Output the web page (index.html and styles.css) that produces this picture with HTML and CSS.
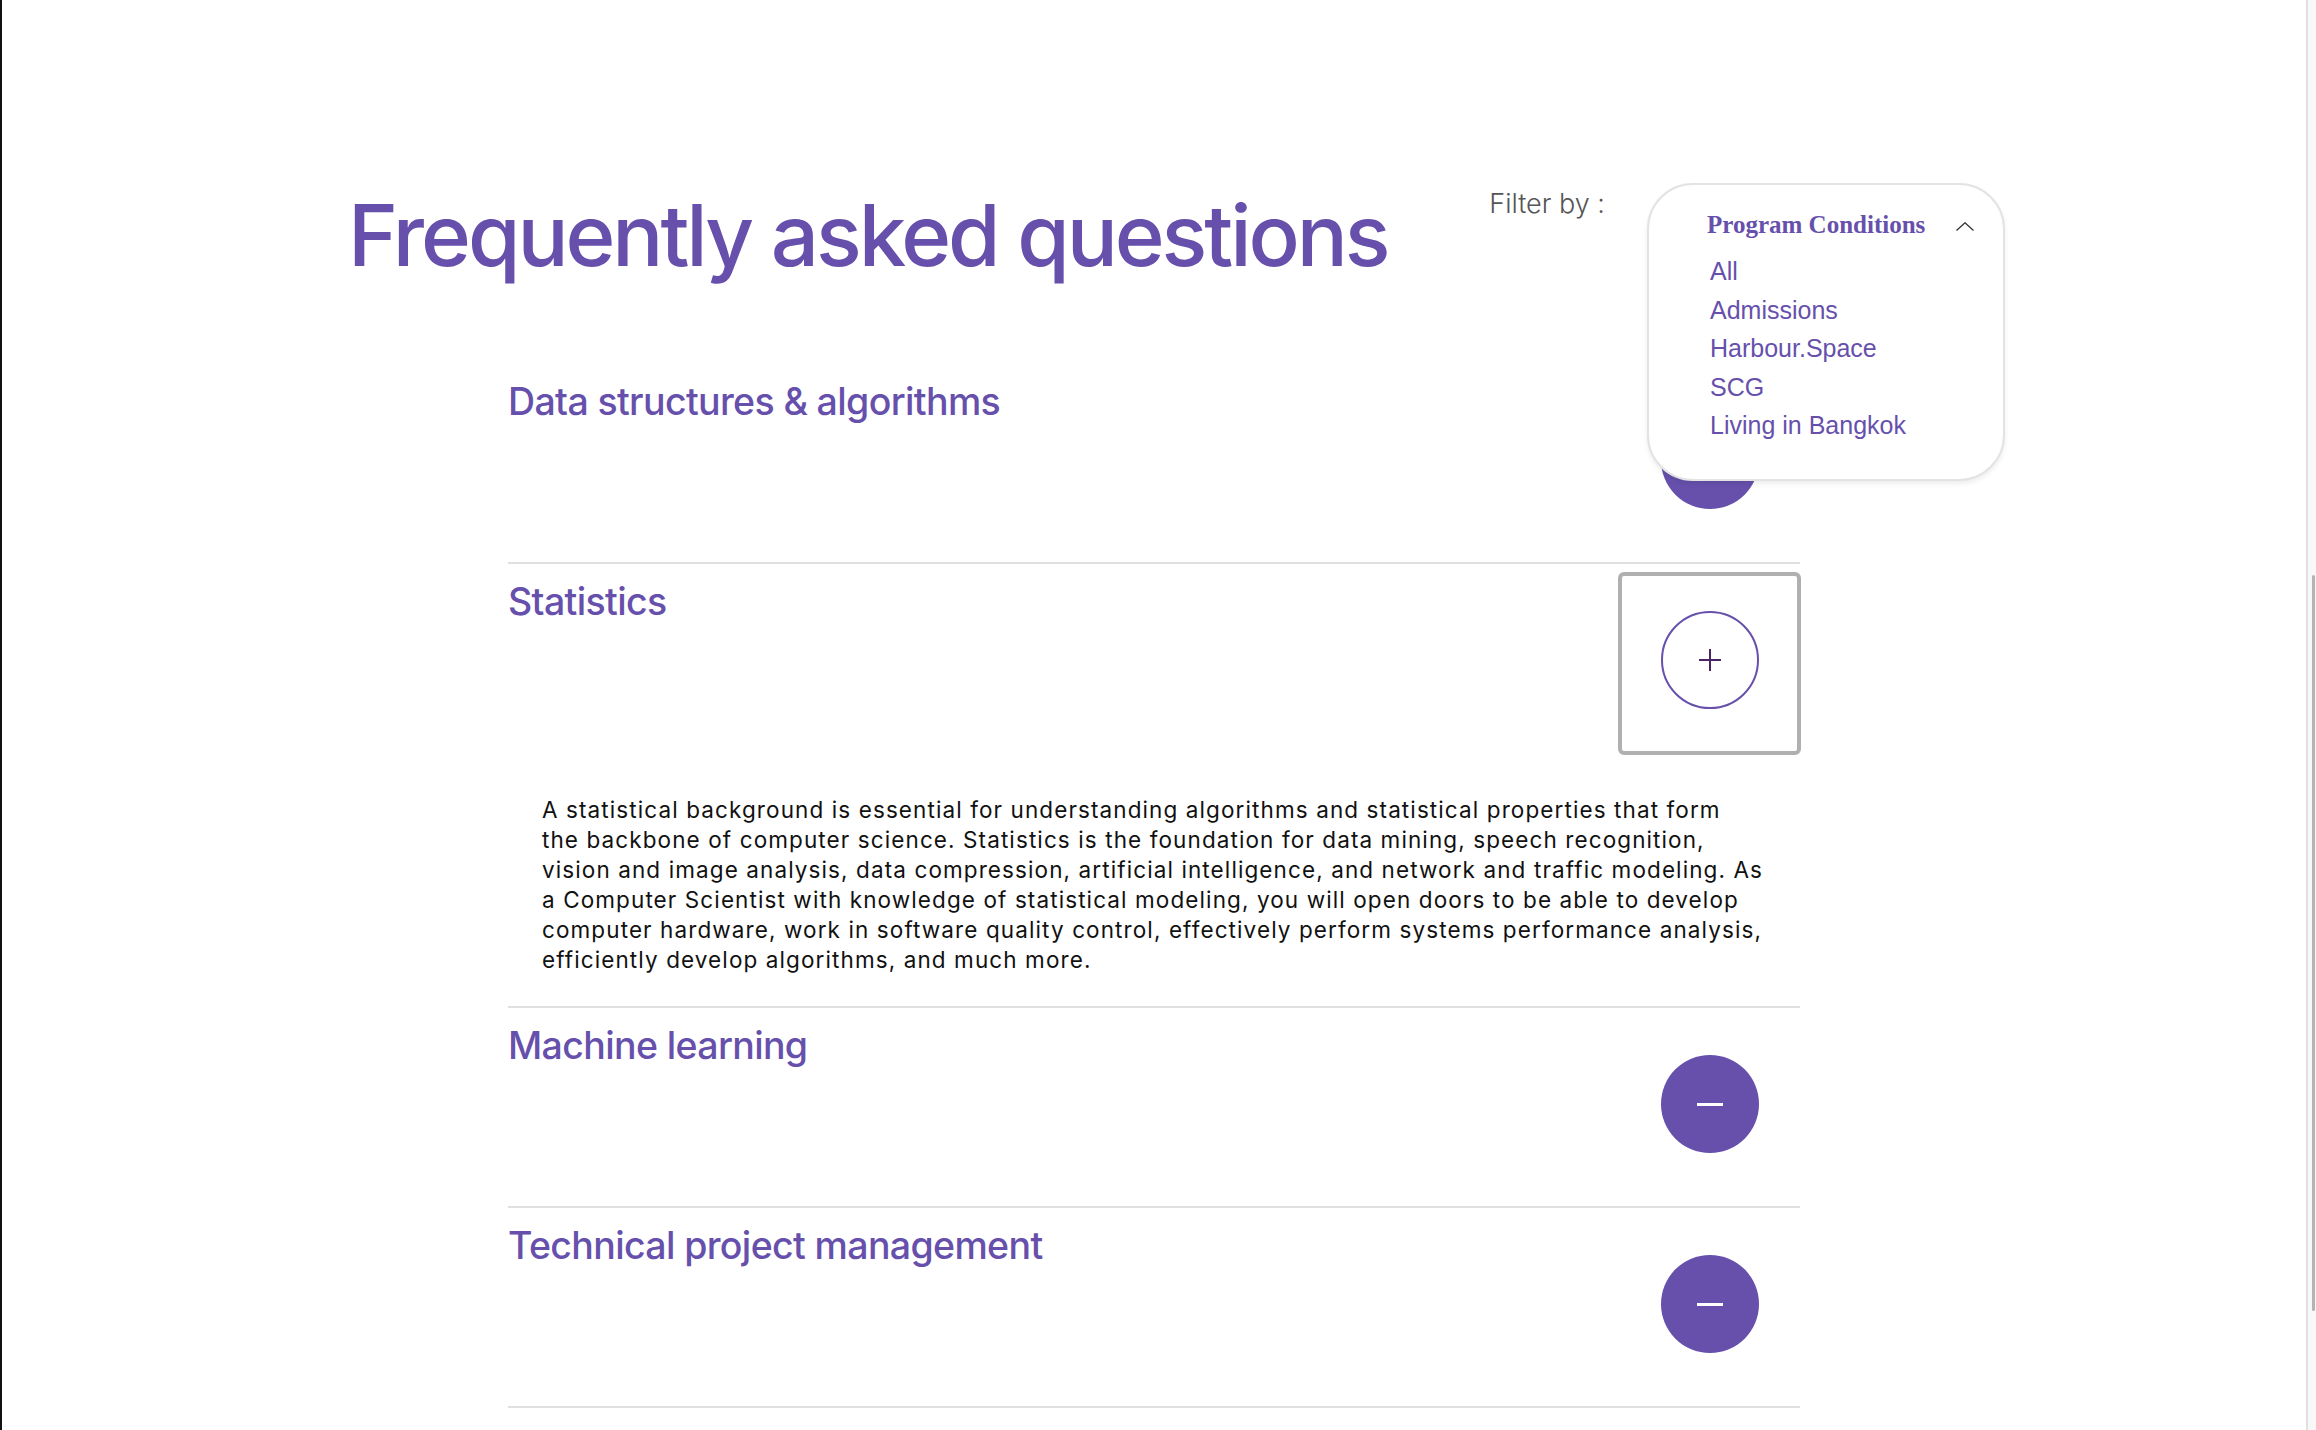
FILE: index.html
```html
<!DOCTYPE html>
<html lang="en">
<head>
<meta charset="utf-8">
<title>Frequently asked questions</title>
<link rel="stylesheet" href="styles.css">
</head>
<body>
<div class="window">
  <main class="page">
    <header class="page-header">
      <h1 class="page-title">Frequently asked questions</h1>
      <div class="filter">
        <span class="filter-label">Filter by :</span>
        <div class="filter-anchor">
          <div class="dropdown">
            <div class="dropdown-head">
              <span>Program Conditions</span>
              <svg class="chevron" viewBox="0 0 18 9" width="18" height="9"><path d="M0.5 8.5 L9 0.8 L17.5 8.5" fill="none" stroke="#333" stroke-width="1.3"/></svg>
            </div>
            <ul class="dropdown-list">
              <li>All</li>
              <li>Admissions</li>
              <li>Harbour.Space</li>
              <li>SCG</li>
              <li>Living in Bangkok</li>
            </ul>
          </div>
        </div>
      </div>
    </header>

    <section class="faq">
      <div class="faq-item">
        <div class="faq-head">
          <h2 class="faq-title">Data structures &amp; algorithms</h2>
          <button class="faq-toggle" type="button"><span class="circle filled"><svg viewBox="0 0 26 3" width="26" height="3"><rect width="26" height="3" fill="#fff"/></svg></span></button>
        </div>
      </div>

      <div class="faq-item">
        <div class="faq-head">
          <h2 class="faq-title">Statistics</h2>
          <button class="faq-toggle is-focused" type="button"><span class="circle outline"><svg viewBox="0 0 22 22" width="22" height="22"><path d="M11 0 V22 M0 11 H22" stroke="#4b2466" stroke-width="2" fill="none"/></svg></span></button>
        </div>
        <div class="faq-body">
          <p>A statistical background is essential for understanding algorithms and statistical properties that form the backbone of computer science. Statistics is the foundation for data mining, speech recognition, vision and image analysis, data compression, artificial intelligence, and network and traffic modeling. As a Computer Scientist with knowledge of statistical modeling, you will open doors to be able to develop computer hardware, work in software quality control, effectively perform systems performance analysis, efficiently develop algorithms, and much more.</p>
        </div>
      </div>

      <div class="faq-item">
        <div class="faq-head">
          <h2 class="faq-title">Machine learning</h2>
          <button class="faq-toggle" type="button"><span class="circle filled"><svg viewBox="0 0 26 3" width="26" height="3"><rect width="26" height="3" fill="#fff"/></svg></span></button>
        </div>
      </div>

      <div class="faq-item">
        <div class="faq-head">
          <h2 class="faq-title">Technical project management</h2>
          <button class="faq-toggle" type="button"><span class="circle filled"><svg viewBox="0 0 26 3" width="26" height="3"><rect width="26" height="3" fill="#fff"/></svg></span></button>
        </div>
      </div>

      <div class="faq-item">
        <div class="faq-head">
          <h2 class="faq-title">Data analytics</h2>
          <button class="faq-toggle" type="button"><span class="circle filled"><svg viewBox="0 0 26 3" width="26" height="3"><rect width="26" height="3" fill="#fff"/></svg></span></button>
        </div>
      </div>
    </section>
  </main>
  <div class="scrollbar"><div class="scrollbar-thumb"></div></div>
</div>
</body>
</html>
```

FILE: styles.css
```css
* { box-sizing: border-box; }

html, body {
  margin: 0;
  padding: 0;
}

body {
  height: 1430px;
  overflow: hidden;
  background: #fff;
  font-family: Inter, "Noto Sans", sans-serif;
}

.window {
  display: flex;
  height: 100%;
  border-left: 2px solid #111;
}

.page {
  flex: 1;
  min-width: 0;
}

/* Header */
.page-header {
  display: flex;
  align-items: flex-start;
  width: 1657px;
  margin-left: 346px;
  padding-top: 183px;
}

.page-title {
  margin: 10px 0 0;
  font-size: 85px;
  line-height: 1;
  font-weight: 500;
  letter-spacing: -0.036em;
  color: #6650ac;
}

.filter {
  margin-left: auto;
  display: flex;
  align-items: flex-start;
  gap: 42px;
}

.filter-label {
  margin-top: 7px;
  font-size: 27px;
  line-height: 1;
  font-weight: 300;
  color: #555;
}

.filter-anchor {
  position: relative;
  width: 358px;
}

.dropdown {
  position: absolute;
  top: 0;
  left: 0;
  z-index: 10;
  width: 358px;
  background: #fff;
  border: 2px solid #e3e3e3;
  border-radius: 46px;
  padding: 25px 29px 34px 58px;
  box-shadow: 0 3px 5px rgba(0, 0, 0, 0.07);
}

.dropdown-head {
  display: flex;
  align-items: center;
  justify-content: space-between;
  height: 30px;
  font-family: "Liberation Serif", "Times New Roman", serif;
  font-weight: 700;
  font-size: 25px;
  color: #6650ac;
}

.chevron {
  display: block;
  margin-top: 3px;
}

.dropdown-list {
  list-style: none;
  margin: 12px 0 0 3px;
  padding: 0;
  font-family: "Liberation Sans", Arial, sans-serif;
  font-size: 25px;
  line-height: 38.5px;
  color: #6650ac;
}

/* FAQ list */
.faq {
  width: 1292px;
  margin: 86px auto 0;
}

.faq-item {
  border-bottom: 2px solid #e0e0e0;
  padding: 8px 0 7px;
}

.faq-head {
  display: flex;
  align-items: flex-start;
  justify-content: space-between;
}

.faq-title {
  margin: 7px 0 0;
  font-size: 37.5px;
  line-height: 1.2;
  font-weight: 500;
  letter-spacing: -0.017em;
  color: #6650ac;
}

.faq-toggle {
  flex: none;
  width: 183px;
  height: 183px;
  margin-right: -1px;
  display: flex;
  align-items: center;
  justify-content: center;
  padding: 0 0 7px;
  border: 4px solid transparent;
  border-radius: 6px;
  background: none;
}

.faq-toggle.is-focused {
  border-color: #b0b0b0;
}

.circle {
  width: 98px;
  height: 98px;
  border-radius: 50%;
  display: flex;
  align-items: center;
  justify-content: center;
}

.circle svg { display: block; }

.circle.filled {
  background: #6650ac;
}

.circle.outline {
  border: 2px solid #6650ac;
}

.faq-body {
  padding: 40px 35.5px 24px 34px;
  font-size: 22.5px;
  line-height: 30px;
  letter-spacing: 1.1px;
  color: #111;
}

.faq-body p {
  margin: 0;
}

/* Scrollbar */
.scrollbar {
  flex: none;
  width: 10px;
  border-left: 2px solid #e0e0e0;
  background: #f8f8f8;
  padding: 575px 1px 0 4px;
}

.scrollbar-thumb {
  width: 3px;
  height: 736px;
  border-radius: 2px;
  background: #b3b3b3;
}
```
